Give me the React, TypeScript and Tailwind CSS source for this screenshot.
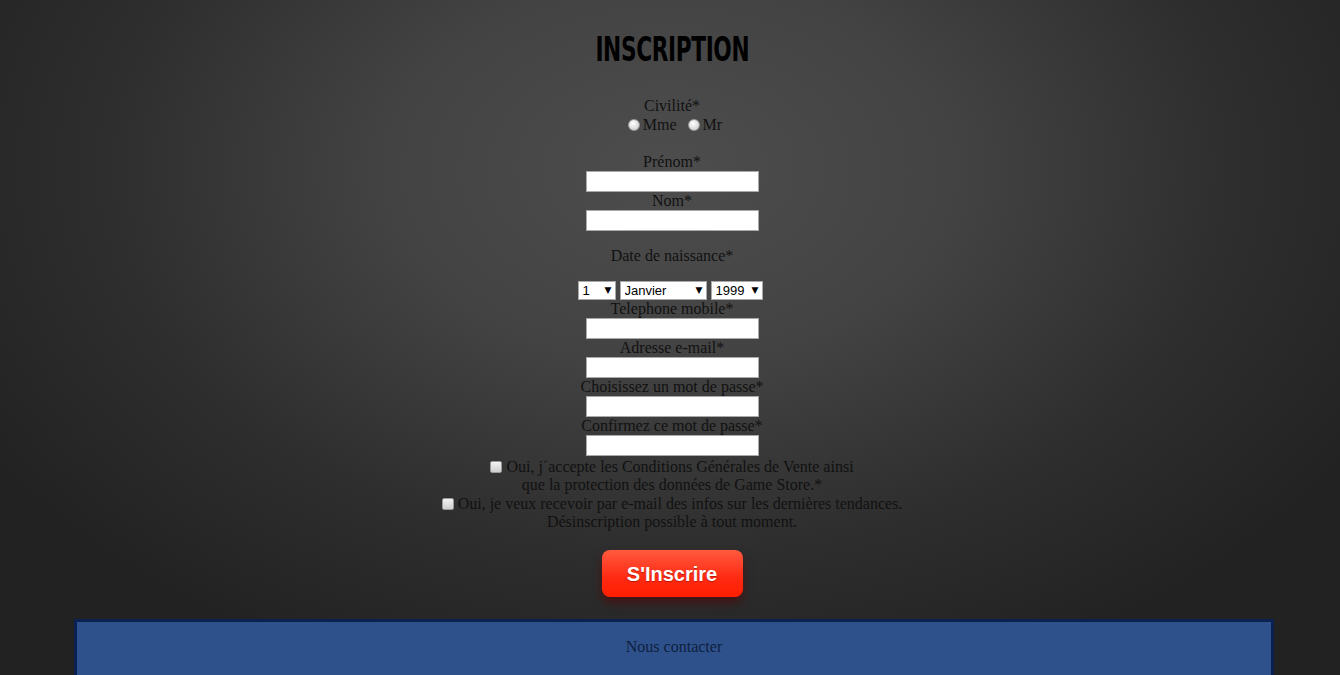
import { useState } from "react";

const serif = "font-['Liberation_Serif','Times_New_Roman',serif]";

function Field({ label }: { label: string }) {
  return (
    <>
      <label className="block leading-[18px]">{label}</label>
      <input
        type="text"
        className="block w-[173px] h-[21px] bg-white border border-[#a9a9a9] outline-none px-1 text-[13px]"
      />
    </>
  );
}

function Select({ value, options, width }: { value: string; options: string[]; width: string }) {
  return (
    <div className={`relative flex ${width} h-[19px]`}>
      <select
        defaultValue={value}
        className="appearance-none block w-full h-[19px] bg-white border border-[#a9a9a9] pl-[4px] py-0 text-[13px] leading-[17px] text-black font-['Liberation_Sans',Arial,sans-serif] outline-none"
      >
        {options.map((o) => (
          <option key={o}>{o}</option>
        ))}
      </select>
      <span className="pointer-events-none absolute top-[5px] right-[4px] text-[9px] leading-[9px] text-black font-['DejaVu_Sans',sans-serif]">
        ▼
      </span>
    </div>
  );
}

const radio =
  "appearance-none inline-block w-[12px] h-[12px] rounded-full border border-[#9a9a9a] bg-[radial-gradient(circle_at_40%_35%,#ffffff,#d6d6d6_70%,#bcbcbc)]";
const checkbox =
  "appearance-none inline-block w-[12px] h-[12px] rounded-[2px] border border-[#9a9a9a] bg-[linear-gradient(#f2f2f2,#cfcfcf)] align-[-1px]";

const months = ["Janvier", "Février", "Mars", "Avril", "Mai", "Juin", "Juillet", "Août", "Septembre", "Octobre", "Novembre", "Décembre"];

export default function App() {
  const [civ, setCiv] = useState("");
  return (
    <div
      className={`min-h-screen w-full bg-[radial-gradient(ellipse_60%_80%_at_50%_25%,#4d4d4d_0%,#434343_35%,#2e2e2e_70%,#222_100%)] ${serif} text-[16px] text-[#111]`}
    >
      <div className="flex flex-col items-center pt-[30px] pl-[4px]">
        <h1 className="h-[40px] leading-[40px] text-[33px] font-bold text-black font-['DejaVu_Sans_Condensed','DejaVu_Sans',sans-serif] tracking-[-0.5px] scale-x-[0.73] scale-y-[1.04]">
          INSCRIPTION
        </h1>

        <div className="mt-[27px] leading-[18px]">Civilité*</div>
        <div className="h-[18px] flex items-center ml-[6px] mt-[1px]">
          <input type="radio" name="civ" className={radio} checked={civ === "Mme"} onChange={() => setCiv("Mme")} />
          <span className="ml-[3px] leading-[18px]">Mme</span>
          <input type="radio" name="civ" className={`${radio} ml-[11px]`} checked={civ === "Mr"} onChange={() => setCiv("Mr")} />
          <span className="ml-[3px] leading-[18px]">Mr</span>
        </div>

        <div className="mt-[19px] flex flex-col items-center">
          <Field label="Prénom*" />
          <Field label="Nom*" />
        </div>

        <div className="mt-[16px] leading-[18px]">Date de naissance*</div>
        <div className="mt-[16px] -ml-[4px] flex gap-[4px]">
          <Select value="1" options={Array.from({ length: 31 }, (_, i) => String(i + 1))} width="w-[38px]" />
          <Select value="Janvier" options={months} width="w-[87px]" />
          <Select value="1999" options={Array.from({ length: 80 }, (_, i) => String(2010 - i))} width="w-[52px]" />
        </div>

        <div className="flex flex-col items-center">
          <Field label="Telephone mobile*" />
          <Field label="Adresse e-mail*" />
          <Field label="Choisissez un mot de passe*" />
          <Field label="Confirmez ce mot de passe*" />
        </div>

        <div className="mt-[2px] text-center leading-[18px]">
          <input type="checkbox" className={`${checkbox} mr-[4px]`} />
          Oui, j´accepte les Conditions Générales de Vente ainsi
          <br />
          que la protection des données de Game Store.*
        </div>
        <div className="mt-[1px] text-center leading-[18px]">
          <input type="checkbox" className={`${checkbox} mr-[4px]`} />
          Oui, je veux recevoir par e-mail des infos sur les dernières tendances.
          <br />
          Désinscription possible à tout moment.
        </div>

        <button className="mt-[19px] w-[141px] h-[47px] rounded-[8px] bg-[linear-gradient(#ff5a3f,#ff2a12_60%,#ff1e00)] text-white text-[20px] font-bold font-['Liberation_Sans',Arial,sans-serif] [text-shadow:0_1px_1px_rgba(120,0,0,0.5)] shadow-[0_6px_10px_rgba(90,0,0,0.55)]">
          S'Inscrire
        </button>
      </div>

      <footer className="mt-[22px] ml-[74px] w-[1200px] border-[3px] border-[#0b2152] bg-[#2e518b] pt-[16px] pb-[20px] text-center leading-[18px] text-[#0e1f40]">
        Nous contacter
      </footer>
    </div>
  );
}
